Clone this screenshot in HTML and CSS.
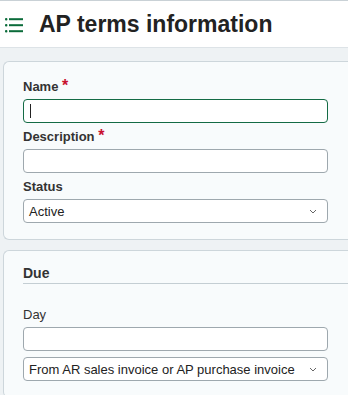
FILE: index.html
```html
<!DOCTYPE html>
<html>
<head>
  <title>AP terms information</title>
  <link rel="stylesheet" href="styles.css">
</head>
<body>
<header class="page-header">
  <svg class="list-icon" width="18" height="16" viewBox="0 0 18 16">
    <rect x="0" y="1" width="2.4" height="2.4" rx="1" fill="#0b6b3a"/>
    <rect x="4" y="1.2" width="14" height="2" fill="#0b6b3a"/>
    <rect x="0" y="7" width="2.4" height="2.4" rx="1" fill="#0b6b3a"/>
    <rect x="4" y="7.2" width="14" height="2" fill="#0b6b3a"/>
    <rect x="0" y="13" width="2.4" height="2.4" rx="1" fill="#0b6b3a"/>
    <rect x="4" y="13.2" width="14" height="2" fill="#0b6b3a"/>
  </svg>
  <h1>AP terms information</h1>
</header>

<main class="content">
  <section class="card">
    <label class="field-label">Name <span class="required">*</span></label>
    <div class="text-input focused"><span class="caret"></span></div>

    <label class="field-label">Description <span class="required">*</span></label>
    <div class="text-input"></div>

    <label class="field-label">Status</label>
    <div class="select-input">
      <span>Active</span>
      <svg class="chevron" width="8" height="5" viewBox="0 0 8 5"><path d="M1 1 L4 4 L7 1" fill="none" stroke="#666" stroke-width="1"/></svg>
    </div>
  </section>

  <section class="card">
    <h2 class="section-title">Due</h2>
    <label class="field-label plain">Day</label>
    <div class="text-input"></div>
    <div class="select-input">
      <span>From AR sales invoice or AP purchase invoice</span>
      <svg class="chevron" width="8" height="5" viewBox="0 0 8 5"><path d="M1 1 L4 4 L7 1" fill="none" stroke="#666" stroke-width="1"/></svg>
    </div>
  </section>
</main>
</body>
</html>
```

FILE: styles.css
```css
/* Page base */
body {
  margin: 0;
  padding: 0;
  background-color: #eef2f4;
  font-family: "Liberation Sans", Arial, sans-serif;
  color: #333;
  overflow: hidden;
}

/* Top title bar */
.page-header {
  display: flex;
  align-items: center;
  height: 46px;
  background-color: #fff;
  border-top: 1px solid #c9d1d6;
  border-bottom: 1px solid #dde3e7;
  padding-left: 5px;
}

.list-icon {
  margin-top: 2px;
}

.page-header h1 {
  margin: 0 0 0 16px;
  font-size: 23px;
  font-weight: bold;
  color: #222;
}

/* Cards */
.content {
  padding: 13px 0 0 3px;
}

.card {
  background-color: #f8fbfc;
  border: 1px solid #cdd6db;
  border-right: none;
  border-radius: 6px 0 0 6px;
  padding: 17px 19px 10px 19px;
  margin-bottom: 10px;
}

.field-label {
  display: block;
  font-size: 13px;
  font-weight: bold;
  color: #333;
  margin: 0 0 5px 0;
  line-height: 15px;
}

.field-label.plain {
  font-weight: normal;
}

.required {
  color: #c8102e;
  font-size: 16px;
  line-height: 10px;
}

/* Inputs */
.text-input,
.select-input {
  box-sizing: border-box;
  width: 305px;
  height: 24px;
  background-color: #fff;
  border: 1px solid #9ea8ae;
  border-radius: 4px;
  margin-bottom: 6px;
}

.text-input.focused {
  border-color: #146b45;
  display: flex;
  align-items: center;
  padding-left: 6px;
}

.caret {
  width: 1px;
  height: 14px;
  background-color: #222;
}

.select-input {
  display: flex;
  align-items: center;
  justify-content: space-between;
  padding: 0 10px 0 5px;
  font-size: 13px;
  color: #222;
}

.chevron {
  margin-top: 1px;
}

/* Section heading in second card */
.section-title {
  margin: -3px -19px 23px 0;
  padding-bottom: 2px;
  font-size: 14px;
  line-height: 16px;
  font-weight: bold;
  color: #333;
  border-bottom: 1px solid #c4ced3;
}
```
